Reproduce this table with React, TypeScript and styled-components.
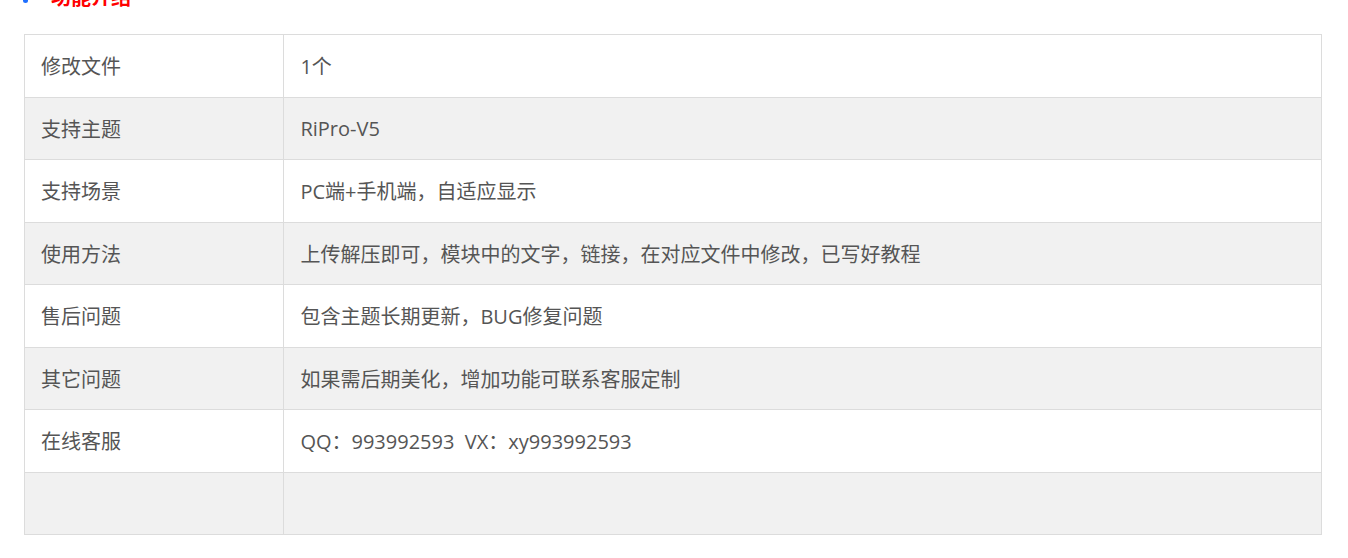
import React from 'react'
import styled, { createGlobalStyle } from 'styled-components'

const GlobalStyle = createGlobalStyle`
  html, body {
    margin: 0;
    padding: 0;
    background: #fff;
  }
  body {
    font-family: "Open Sans", "Noto Sans CJK SC", sans-serif;
    overflow: hidden;
  }
`

const Page = styled.div`
  padding: 0 26px 0 24px;
`

const SectionTitle = styled.h3`
  display: flex;
  align-items: center;
  margin: -18px 0 0 0;
  height: 30px;
  line-height: 30px;
  font-size: 20px;
  font-weight: bold;
  color: #ff0000;
  font-family: "Noto Sans CJK SC", sans-serif;
`

const Dot = styled.span`
  width: 5px;
  height: 5px;
  margin: 6px 23px 0 -1px;
  border-radius: 50%;
  background: #1e6fff;
  flex-shrink: 0;
`

const Table = styled.table`
  width: 100%;
  margin-top: 22px;
  border-collapse: collapse;
  border: 1px solid #dcdcdc;
  table-layout: fixed;
`

const Row = styled.tr<{ $striped: boolean }>`
  background: ${({ $striped }) => ($striped ? '#f1f1f1' : '#fff')};
`

const Cell = styled.td<{ $label?: boolean }>`
  box-sizing: border-box;
  width: ${({ $label }) => ($label ? '20%' : 'auto')};
  height: 62.5px;
  padding: 0 16px;
  border: 1px solid #dcdcdc;
  font-size: 20px;
  color: #555;
  vertical-align: middle;
  white-space: pre;
`

const rows: [string, string][] = [
  ['修改文件', '1个'],
  ['支持主题', 'RiPro-V5'],
  ['支持场景', 'PC端+手机端，自适应显示'],
  ['使用方法', '上传解压即可，模块中的文字，链接，在对应文件中修改，已写好教程'],
  ['售后问题', '包含主题长期更新，BUG修复问题'],
  ['其它问题', '如果需后期美化，增加功能可联系客服定制'],
  ['在线客服', 'QQ：993992593  VX：xy993992593'],
  ['', ''],
]

const App = () => {
  return (
    <Page>
      <GlobalStyle />
      <SectionTitle>
        <Dot />
        功能介绍
      </SectionTitle>
      <Table>
        <tbody>
          {rows.map(([label, value], i) => (
            <Row key={i} $striped={i % 2 === 1}>
              <Cell $label>{label}</Cell>
              <Cell>{value}</Cell>
            </Row>
          ))}
        </tbody>
      </Table>
    </Page>
  )
}

export default App
